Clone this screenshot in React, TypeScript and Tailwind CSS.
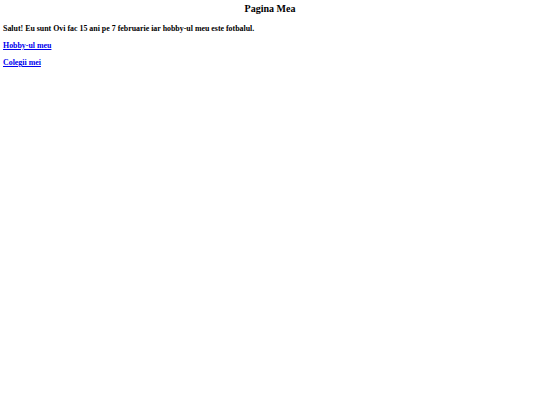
export default function App() {
  return (
    <div className="min-h-[405px] w-[540px] bg-white px-[3px] pt-[3px] font-['Liberation_Serif',serif] text-black">
      <div className="text-center text-[10px] font-bold leading-[12px]">Pagina Mea</div>
      <p className="mt-[9px] text-[7.9px] font-bold leading-[9px]">
        Salut! Eu sunt Ovi fac 15 ani pe 7 februarie iar hobby-ul meu este fotbalul.
      </p>
      <p className="mt-[8px] text-[7.9px] font-bold leading-[9px]">
        <a href="#" className="text-[#0000EE] underline">Hobby-ul meu</a>
      </p>
      <p className="mt-[8px] text-[7.9px] font-bold leading-[9px]">
        <a href="#" className="text-[#0000EE] underline">Colegii mei</a>
      </p>
    </div>
  );
}
